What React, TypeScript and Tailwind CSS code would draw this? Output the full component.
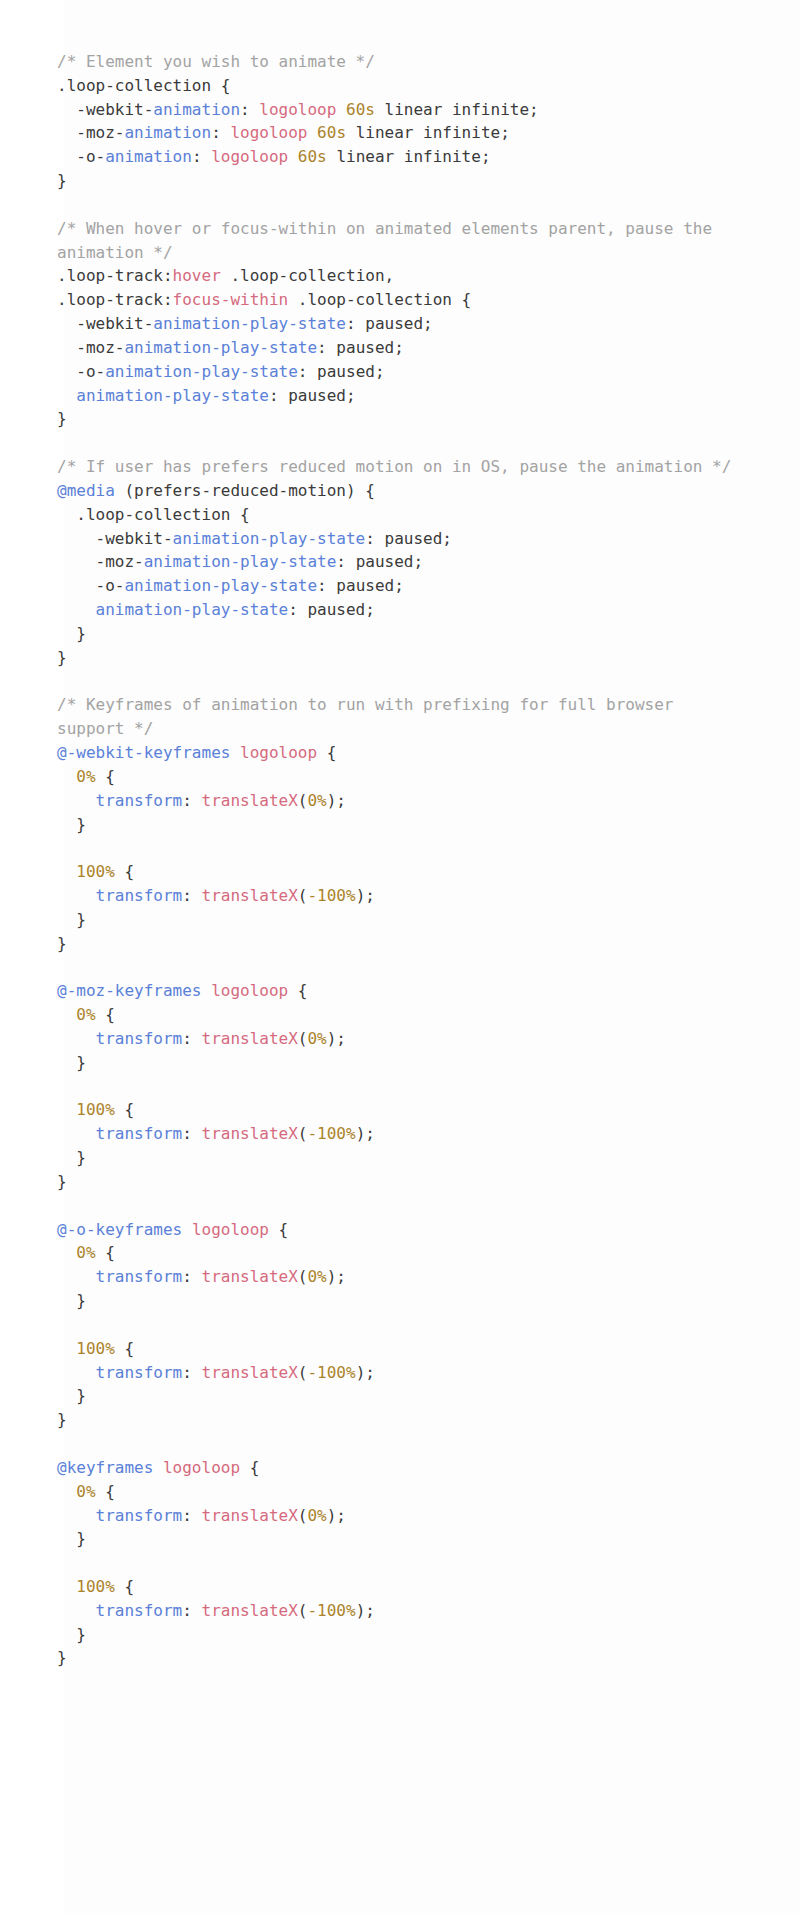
import React from "react";

type Seg = [string, string];

const C = "text-[#a3a3a3]";
const T = "text-[#3a3a3a]";
const B = "text-[#5a80d8]";
const R = "text-[#d56a7e]";
const N = "text-[#ab832b]";

const t = (s: string): Seg => [T, s];
const b = (s: string): Seg => [B, s];
const r = (s: string): Seg => [R, s];
const n = (s: string): Seg => [N, s];
const c = (s: string): Seg => [C, s];

const anim = (prefix: string): Seg[] => [
  t("  " + prefix),
  b("animation"),
  t(": "),
  r("logoloop"),
  t(" "),
  n("60s"),
  t(" linear infinite;"),
];

const playState = (indent: string, prefix: string): Seg[] =>
  prefix
    ? [t(indent + prefix), b("animation-play-state"), t(": paused;")]
    : [t(indent), b("animation-play-state"), t(": paused;")];

const keyframes = (name: string): Seg[][] => [
  [b(name), t(" "), r("logoloop"), t(" {")],
  [t("  "), n("0%"), t(" {")],
  [t("    "), b("transform"), t(": "), r("translateX"), t("("), n("0%"), t(");")],
  [t("  }")],
  [],
  [t("  "), n("100%"), t(" {")],
  [t("    "), b("transform"), t(": "), r("translateX"), t("("), n("-100%"), t(");")],
  [t("  }")],
  [t("}")],
];

const lines: Seg[][] = [
  [c("/* Element you wish to animate */")],
  [t(".loop-collection {")],
  anim("-webkit-"),
  anim("-moz-"),
  anim("-o-"),
  [t("}")],
  [],
  [c("/* When hover or focus-within on animated elements parent, pause the animation */")],
  [t(".loop-track:"), r("hover"), t(" .loop-collection,")],
  [t(".loop-track:"), r("focus-within"), t(" .loop-collection {")],
  playState("  ", "-webkit-"),
  playState("  ", "-moz-"),
  playState("  ", "-o-"),
  playState("  ", ""),
  [t("}")],
  [],
  [c("/* If user has prefers reduced motion on in OS, pause the animation */")],
  [b("@media"), t(" (prefers-reduced-motion) {")],
  [t("  .loop-collection {")],
  playState("    ", "-webkit-"),
  playState("    ", "-moz-"),
  playState("    ", "-o-"),
  playState("    ", ""),
  [t("  }")],
  [t("}")],
  [],
  [c("/* Keyframes of animation to run with prefixing for full browser support */")],
  ...keyframes("@-webkit-keyframes"),
  [],
  ...keyframes("@-moz-keyframes"),
  [],
  ...keyframes("@-o-keyframes"),
  [],
  ...keyframes("@keyframes"),
];

export default function App() {
  return (
    <div className="min-h-[1913px] w-[800px] bg-[linear-gradient(to_right,#ffffff_64px,#fdfdfd_64px)] pt-[50px] pl-[57px]">
      <pre
        className="m-0 w-[682px] whitespace-pre-wrap text-[16px] leading-[23.83px] text-[#3a3a3a]"
        style={{ fontFamily: '"DejaVu Sans Mono", "Liberation Mono", monospace' }}
      >
        {lines.map((segs, i) => (
          <div key={i} className="min-h-[23.83px]">
            {segs.map(([cls, s], j) => (
              <span key={j} className={cls}>
                {s}
              </span>
            ))}
          </div>
        ))}
      </pre>
    </div>
  );
}
